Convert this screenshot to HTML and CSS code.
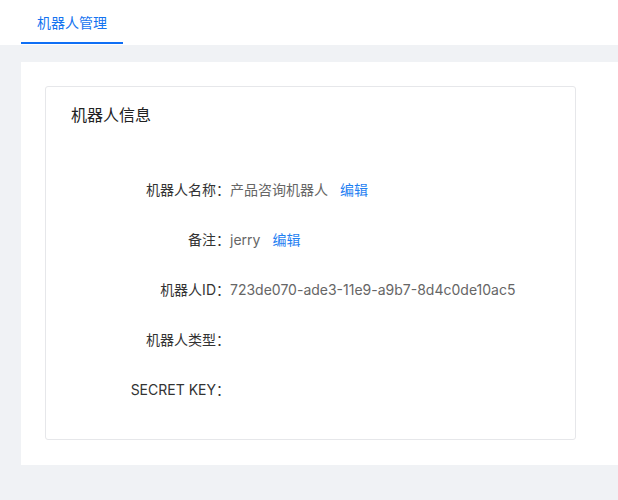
FILE: index.html
```html
<!DOCTYPE html>
<html lang="zh-CN">
<head>
<meta charset="utf-8">
<title>机器人管理</title>
<link rel="stylesheet" href="styles.css">
</head>
<body>
<header class="topbar">
  <div class="tab tab-active">机器人管理</div>
</header>
<main class="main">
  <section class="panel">
    <div class="card">
      <h2 class="card-title">机器人信息</h2>
      <div class="rows">
        <div class="row">
          <span class="label">机器人名称：</span>
          <span class="value">产品咨询机器人</span>
          <a class="link">编辑</a>
        </div>
        <div class="row">
          <span class="label">备注：</span>
          <span class="value">jerry</span>
          <a class="link">编辑</a>
        </div>
        <div class="row">
          <span class="label">机器人ID：</span>
          <span class="value">723de070-ade3-11e9-a9b7-8d4c0de10ac5</span>
        </div>
        <div class="row">
          <span class="label">机器人类型：</span>
          <span class="value"></span>
        </div>
        <div class="row">
          <span class="label">SECRET KEY：</span>
          <span class="value"></span>
        </div>
      </div>
    </div>
  </section>
</main>
</body>
</html>
```
FILE: styles.css
```css
* { box-sizing: border-box; }

html, body {
  margin: 0;
  padding: 0;
}

body {
  background: #f0f2f5;
  font-family: "Inter", "Noto Sans CJK SC", sans-serif;
  font-size: 14px;
  color: #333;
  overflow: hidden;
}

.topbar {
  background: #fff;
  height: 45px;
  padding-left: 21px;
  display: flex;
}

.tab {
  width: 102px;
  height: 44px;
  display: flex;
  align-items: center;
  justify-content: center;
  padding-top: 2px;
  font-size: 14px;
  color: #333;
}

.tab-active {
  color: #1473f0;
  border-bottom: 2px solid #0f6ff5;
}

.main {
  padding: 17px 0 35px 21px;
}

.panel {
  background: #fff;
  padding: 24px 24px 25px 24px;
}

.card {
  width: 531px;
  border: 1px solid #e6e7ea;
  border-radius: 3px;
  padding: 16px 24px 24px 24px;
}

.card-title {
  margin: 0;
  padding-left: 1px;
  font-size: 16px;
  line-height: 24px;
  font-weight: 400;
  color: #222;
}

.rows {
  margin-top: 38px;
  display: flex;
  flex-direction: column;
}

.row {
  height: 50px;
  display: flex;
  align-items: center;
  line-height: 20px;
}

.label {
  width: 160px;
  flex: none;
  text-align: right;
  color: #333;
}

.value {
  color: #666;
}

.link {
  margin-left: 12px;
  color: #1f7ff2;
  cursor: pointer;
}
```
